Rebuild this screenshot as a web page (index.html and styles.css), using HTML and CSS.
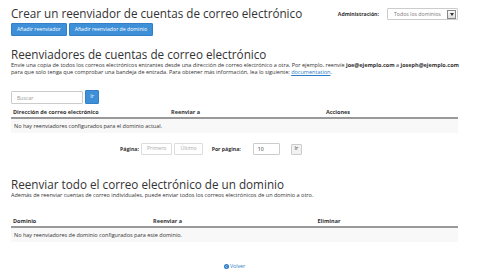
FILE: index.html
```html
<!DOCTYPE html>
<html lang="es">
<head>
<meta charset="utf-8">
<title>Reenviadores</title>
<link rel="stylesheet" href="styles.css">
</head>
<body>
<div class="page">
  <div class="top">
    <div class="top-left">
      <h1 class="title">Crear un reenviador de cuentas de correo electrónico</h1>
      <div class="actions">
        <button class="btn btn-primary">Añadir reenviador</button>
        <button class="btn btn-primary">Añadir reenviador de dominio</button>
      </div>
    </div>
    <div class="admin">
      <span class="admin-label">Administración:</span>
      <div class="select">
        <span class="select-text">Todos los dominios</span>
        <span class="select-arrow"><svg width="4" height="3" viewBox="0 0 4 3"><path d="M0 0h4L2 3z" fill="#333"/></svg></span>
      </div>
    </div>
  </div>

  <h2 class="section-title first">Reenviadores de cuentas de correo electrónico</h2>
  <p class="desc">Envíe una copia de todos los correos electrónicos entrantes desde una dirección de correo electrónico a otra. Por ejemplo, reenvíe <b>joe@ejemplo.com</b> a <b>joseph@ejemplo.com</b> para que solo tenga que comprobar una bandeja de entrada. Para obtener más información, lea lo siguiente: <a href="#" class="link">documentation</a>.</p>

  <div class="search">
    <input class="search-input" type="text" placeholder="Buscar">
    <button class="btn btn-primary btn-go">Ir</button>
  </div>

  <div class="table t1">
    <div class="thead">
      <span>Dirección de correo electrónico</span>
      <span>Reenviar a</span>
      <span class="center">Acciones</span>
    </div>
    <div class="trow">No hay reenviadores configurados para el dominio actual.</div>
  </div>

  <div class="pager">
    <span class="pager-label">Página:</span>
    <button class="btn btn-light">Primero</button>
    <button class="btn btn-light">Último</button>
    <span class="pager-label per">Por página:</span>
    <input class="per-input" type="text" value="10">
    <button class="btn btn-gray">Ir</button>
  </div>

  <h2 class="section-title second">Reenviar todo el correo electrónico de un dominio</h2>
  <p class="desc">Además de reenviar cuentas de correo individuales, puede enviar todos los correos electrónicos de un dominio a otro.</p>

  <div class="table t2">
    <div class="thead">
      <span>Dominio</span>
      <span>Reenviar a</span>
      <span class="center">Eliminar</span>
    </div>
    <div class="trow">No hay reenviadores de dominio configurados para este dominio.</div>
  </div>

  <div class="back">
    <a href="#" class="link back-link"><svg class="back-icon" width="5" height="5" viewBox="0 0 12 12"><circle cx="6" cy="6" r="6" fill="#2a7bc5"/><path d="M7 3.2L4.2 6 7 8.8" stroke="#fff" stroke-width="2" fill="none"/></svg>Volver</a>
  </div>
</div>
</body>
</html>
```

FILE: styles.css
```css
* { box-sizing: border-box; }
body {
  margin: 0;
  font-family: "Open Sans", "DejaVu Sans", sans-serif;
  color: #333;
  background: #fff;
  font-size: 5.5px;
}
.page {
  padding: 6px 22px 0 11px;
}
.top {
  display: flex;
  justify-content: space-between;
  align-items: flex-start;
}
.title {
  margin: 0;
  font-size: 11.7px;
  font-weight: 400;
  line-height: 14px;
  color: #333;
}
.actions {
  display: flex;
  gap: 2px;
  margin-top: 3px;
}
.btn {
  font-family: inherit;
  font-size: 5.2px;
  border-radius: 1px;
  cursor: pointer;
  line-height: 1;
}
.btn-primary {
  background: #3d8fd8;
  border: 1px solid #3380c8;
  color: #fff;
  height: 13px;
  padding: 0 5px;
}
.admin {
  display: flex;
  align-items: center;
  gap: 8px;
  margin-top: 2px;
}
.admin-label {
  font-weight: 700;
  font-size: 5.2px;
}
.select {
  width: 71px;
  height: 12px;
  border: 1px solid #ccc;
  border-radius: 1px;
  display: flex;
  align-items: center;
  justify-content: space-between;
  padding-left: 6px;
  padding-right: 1px;
  color: #777;
  font-size: 5.2px;
}
.select-arrow {
  width: 9px;
  height: 9px;
  border: 1px solid #888;
  background: linear-gradient(#fafafa, #ddd);
  display: flex;
  align-items: center;
  justify-content: center;
}
.section-title {
  margin: 0;
  font-size: 11.7px;
  font-weight: 400;
  line-height: 14px;
}
.section-title.first { margin-top: 11px; }
.section-title.second { margin-top: 22px; }
.desc {
  margin: 1px -3px 0 0;
  font-size: 5.5px;
  line-height: 7px;
}
.desc b { font-weight: 700; }
.link { color: #2a7bc5; }
.search {
  display: flex;
  gap: 2px;
  margin-top: 15px;
}
.search-input {
  width: 72px;
  height: 13px;
  border: 1px solid #ccc;
  border-radius: 1px;
  font-family: inherit;
  font-size: 5.2px;
  padding: 0 5px;
  color: #555;
}
.search-input::placeholder { color: #999; }
.btn-go {
  height: 14px;
  width: 14px;
  padding: 0;
  margin-top: -1px;
}
.t1 { margin-top: 2px; }
.t2 { margin-top: 16px; }
.thead {
  display: grid;
  height: 13px;
  align-items: center;
  font-weight: 700;
  border-bottom: 2px solid #999;
}
.thead span { padding-left: 2px; }
.thead .center { padding-left: 0; text-align: center; }
.t1 .thead { grid-template-columns: 158px 49px 1fr; }
.t2 .thead { grid-template-columns: 140px 49px 1fr; }
.trow {
  background: #f8f8f8;
  height: 14px;
  display: flex;
  align-items: center;
  padding-left: 3px;
}
.pager {
  display: flex;
  align-items: center;
  margin-top: 10px;
  padding-left: 109px;
  height: 12px;
}
.pager-label { font-weight: 700; font-size: 5.2px; }
.pager-label:first-child { margin-right: 2px; }
.pager-label.per { margin-left: 7px; margin-right: 12px; }
.btn-light {
  height: 12px;
  padding: 0 5px;
  background: #fff;
  border: 1px solid #ddd;
  color: #aaa;
  margin-right: 2px;
}
.per-input {
  width: 27px;
  height: 12px;
  border: 1px solid #ccc;
  border-radius: 1px;
  font-family: inherit;
  font-size: 5.2px;
  padding: 0 4px;
  color: #333;
  margin-right: 11px;
}
.btn-gray {
  height: 11px;
  width: 11px;
  padding: 0;
  background: #f2f2f2;
  border: 1px solid #ccc;
  color: #333;
}
.back {
  text-align: center;
  margin-top: 20px;
  line-height: 8px;
  font-size: 5.2px;
}
.back-link {
  text-decoration: none;
  display: inline-flex;
  align-items: center;
  gap: 1px;
}
```
